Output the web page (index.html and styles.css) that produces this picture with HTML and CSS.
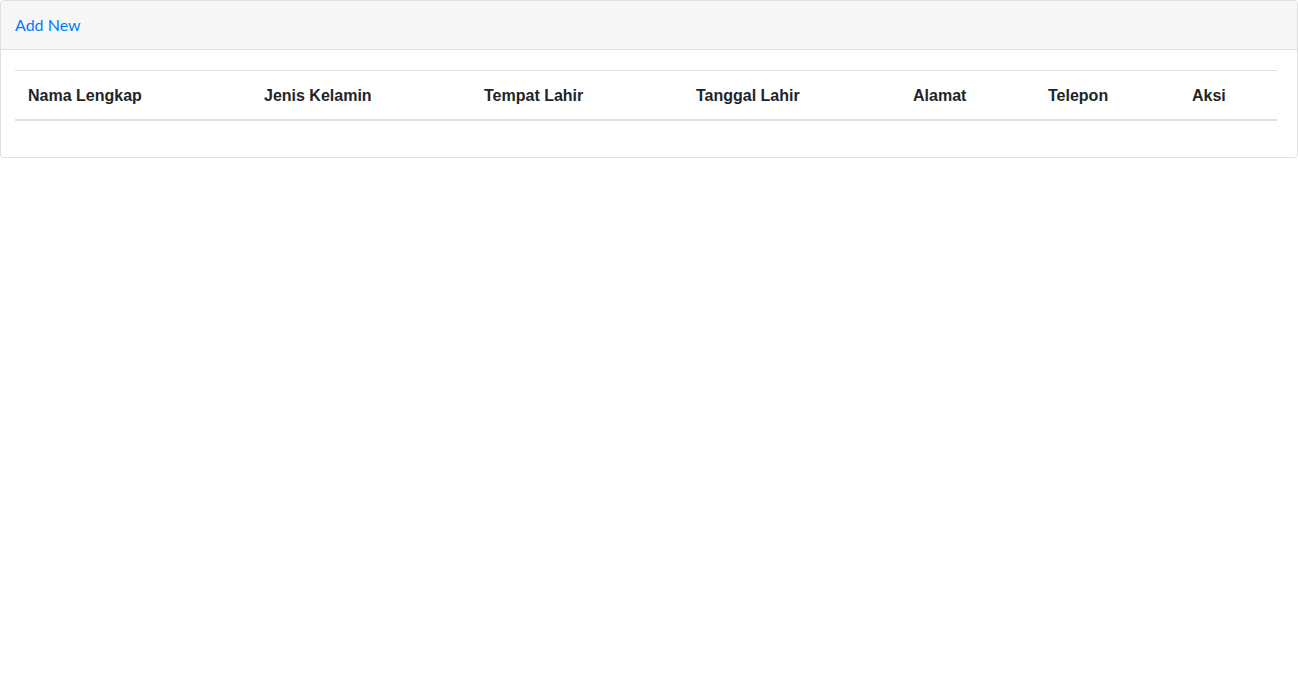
FILE: index.html
```html
<!DOCTYPE html>
<html lang="id">
<head>
    <meta charset="UTF-8">
    <meta name="viewport" content="width=device-width, initial-scale=1.0">
    <title>Data Penduduk</title>
    <link rel="stylesheet" href="styles.css">
</head>
<body>
    <div class="card">
        <div class="card-header">
            <a href="#" class="add-link">Add New</a>
        </div>
        <div class="card-body">
            <table class="table">
                <thead>
                    <tr>
                        <th class="col-nama">Nama Lengkap</th>
                        <th class="col-jk">Jenis Kelamin</th>
                        <th class="col-tempat">Tempat Lahir</th>
                        <th class="col-tanggal">Tanggal Lahir</th>
                        <th class="col-alamat">Alamat</th>
                        <th class="col-telp">Telepon</th>
                        <th class="col-aksi">Aksi</th>
                    </tr>
                </thead>
                <tbody></tbody>
            </table>
        </div>
    </div>
</body>
</html>
```

FILE: styles.css
```css
:root {
    --primary: #007bff;
    --text: #212529;
    --border: #dfdfdf;
    --table-border: #dee2e6;
}

* {
    box-sizing: border-box;
}

body {
    margin: 0;
    font-family: "Lato", "Liberation Sans", sans-serif;
    font-size: 16px;
    line-height: 24px;
    color: var(--text);
    background: #ffffff;
}

.card {
    width: 1298px;
    border: 1px solid var(--border);
    border-radius: 4px;
    background: #ffffff;
}

.card-header {
    padding: 12px 14px;
    background: #f7f7f7;
    border-bottom: 1px solid var(--border);
    border-radius: 4px 4px 0 0;
}

.add-link {
    color: var(--primary);
    text-decoration: none;
}

.card-body {
    padding: 20px 20px 20px 14px;
}

.table {
    width: 100%;
    border-collapse: collapse;
    margin-bottom: 16px;
    table-layout: fixed;
}

.table th {
    text-align: left;
    font-family: "Liberation Sans", "Lato", sans-serif;
    font-weight: bold;
    padding: 13px 12px 11px 13px;
    border-top: 1px solid var(--table-border);
    border-bottom: 2px solid var(--table-border);
}

.col-nama { width: 236px; }
.col-jk { width: 220px; }
.col-tempat { width: 212px; }
.col-tanggal { width: 217px; }
.col-alamat { width: 135px; }
.col-telp { width: 144px; }
.col-aksi { width: auto; }
```
